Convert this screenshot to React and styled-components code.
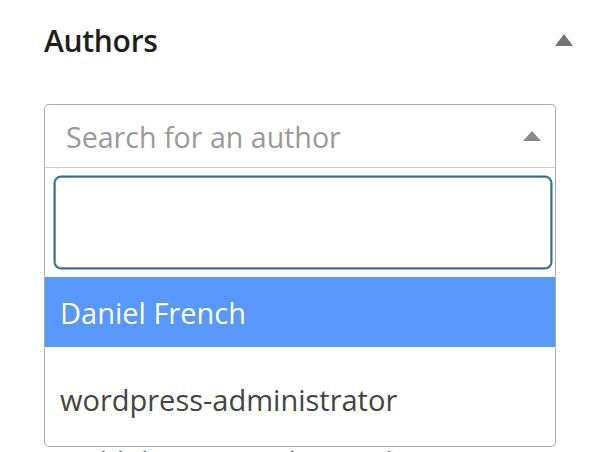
import React from "react";
import styled, { createGlobalStyle } from "styled-components";

const GlobalStyle = createGlobalStyle`
    html, body {
        margin: 0;
        padding: 0;
        background: #ffffff;
        font-family: "Open Sans", "Noto Sans", sans-serif;
    }
`

const Panel = styled.section`
    width: 600px;
    height: 452px;
    overflow: hidden;
    padding: 0 44px;
    box-sizing: border-box;
`

const PanelHeader = styled.div`
    display: flex;
    flex-direction: row;
    justify-content: space-between;
    align-items: center;
    height: 80px;
    margin-right: -17px;
`

const PanelTitle = styled.h2`
    margin: 0;
    font-size: 30px;
    font-weight: 600;
    color: #1e1e1e;
    letter-spacing: -0.3px;
`

const Caret = styled.svg`
    display: block;
    fill: ${props => props.color || "#757575"};
`

const SelectWrap = styled.div`
    position: relative;
    margin-top: 24px;
`

const Selection = styled.div`
    display: flex;
    flex-direction: row;
    justify-content: space-between;
    align-items: center;
    height: 64px;
    padding: 0 14px 0 21px;
    box-sizing: border-box;
    border: 1px solid #aaaaaa;
    border-radius: 5px 5px 0 0;
    border-bottom-color: #cfcfcf;
`

const Placeholder = styled.span`
    font-size: 28.6px;
    color: #999999;
`

const Dropdown = styled.div`
    position: absolute;
    top: 64px;
    left: 0;
    right: 0;
    height: 279px;
    border: 1px solid #aaaaaa;
    border-top: none;
    border-radius: 0 0 5px 5px;
    background: #ffffff;
    overflow: hidden;
    box-sizing: border-box;
`

const SearchBox = styled.div`
    padding: 9px 4px 9px 10px;
`

const SearchInput = styled.input`
    display: block;
    width: 100%;
    height: 91px;
    box-sizing: border-box;
    border: 1px solid #8c8f94;
    border-radius: 6px;
    box-shadow: 0 0 0 1.5px #2271b1;
    outline: none;
    font-size: 28px;
`

const Option = styled.div`
    display: flex;
    align-items: center;
    height: ${props => props.tall ? "104px" : "70px"};
    padding: 0 15px;
    font-size: 29px;
    color: ${props => props.active ? "#ffffff" : "#444444"};
    background: ${props => props.active ? "#5897fb" : "transparent"};
`

const Description = styled.p`
    margin: 274px 0 0 28px;
    font-size: 28px;
    line-height: 38px;
    color: #50575e;
    white-space: nowrap;
`

function Authors() {
    return (
        <Panel>
            <PanelHeader>
                <PanelTitle>Authors</PanelTitle>
                <Caret width="18" height="12" viewBox="0 0 18 12">
                    <path d="M9 0 L18 12 L0 12 Z" />
                </Caret>
            </PanelHeader>
            <SelectWrap>
                <Selection>
                    <Placeholder>Search for an author</Placeholder>
                    <Caret width="18" height="10" viewBox="0 0 18 10" color="#888888">
                        <path d="M9 0 L18 10 L0 10 Z" />
                    </Caret>
                </Selection>
                <Description>Add the post author to this post.</Description>
                <Dropdown>
                    <SearchBox>
                        <SearchInput type="search" />
                    </SearchBox>
                    <Option active>Daniel French</Option>
                    <Option tall>wordpress-administrator</Option>
                </Dropdown>
            </SelectWrap>
        </Panel>
    )
}

export default function App() {
    return (
        <>
            <GlobalStyle />
            <Authors />
        </>
    )
}
